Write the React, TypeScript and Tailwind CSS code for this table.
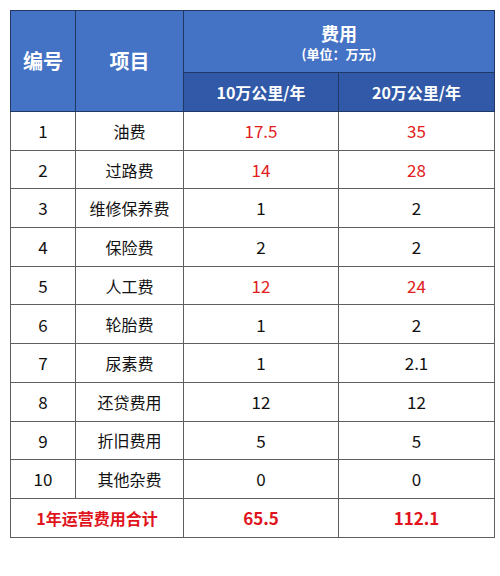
const rows: { no: string; item: string; a: string; b: string; red?: boolean }[] = [
  { no: '1', item: '油费', a: '17.5', b: '35', red: true },
  { no: '2', item: '过路费', a: '14', b: '28', red: true },
  { no: '3', item: '维修保养费', a: '1', b: '2' },
  { no: '4', item: '保险费', a: '2', b: '2' },
  { no: '5', item: '人工费', a: '12', b: '24', red: true },
  { no: '6', item: '轮胎费', a: '1', b: '2' },
  { no: '7', item: '尿素费', a: '1', b: '2.1' },
  { no: '8', item: '还贷费用', a: '12', b: '12' },
  { no: '9', item: '折旧费用', a: '5', b: '5' },
  { no: '10', item: '其他杂费', a: '0', b: '0' },
];

export default function App() {
  return (
    <div
      className="w-[500px] h-[576px] bg-white pt-[10px] pl-[10px]"
      style={{ fontFamily: '"Noto Sans CJK SC", "Noto Sans", sans-serif' }}
    >
      <table className="border-collapse table-fixed w-[484px] text-center">
        <colgroup>
          <col className="w-[65px]" />
          <col className="w-[108px]" />
          <col className="w-[155px]" />
          <col className="w-[156px]" />
        </colgroup>
        <thead>
          <tr className="h-[62px]">
            <th rowSpan={2} className="bg-[#4472c4] border border-[#1f3864] text-white text-[20px] font-bold">编号</th>
            <th rowSpan={2} className="bg-[#4472c4] border border-[#1f3864] text-white text-[20px] font-bold">项目</th>
            <th colSpan={2} className="bg-[#4472c4] border border-[#1f3864] text-white font-bold">
              <div className="text-[18px] leading-[24px]">费用</div>
              <div className="text-[13px] leading-[18px]">(单位：万元)</div>
            </th>
          </tr>
          <tr className="h-[39px]">
            <th className="bg-[#3159a8] border border-[#1f3864] text-white text-[16px] font-bold">10万公里/年</th>
            <th className="bg-[#3159a8] border border-[#1f3864] text-white text-[16px] font-bold">20万公里/年</th>
          </tr>
        </thead>
        <tbody className="text-[16px] text-[#111]">
          {rows.map((r) => (
            <tr key={r.no} className="h-[38.7px]">
              <td className="border border-[#5f5f5f] text-[17px]">{r.no}</td>
              <td className="border border-[#5f5f5f]">{r.item}</td>
              <td className={`border border-[#5f5f5f] text-[17px] ${r.red ? 'text-[#e0201c]' : ''}`}>{r.a}</td>
              <td className={`border border-[#5f5f5f] text-[17px] ${r.red ? 'text-[#e0201c]' : ''}`}>{r.b}</td>
            </tr>
          ))}
          <tr className="h-[38.7px] text-[#e0141c] font-bold">
            <td colSpan={2} className="border border-[#5f5f5f]">1年运营费用合计</td>
            <td className="border border-[#5f5f5f] text-[17px]">65.5</td>
            <td className="border border-[#5f5f5f] text-[17px]">112.1</td>
          </tr>
        </tbody>
      </table>
    </div>
  );
}
